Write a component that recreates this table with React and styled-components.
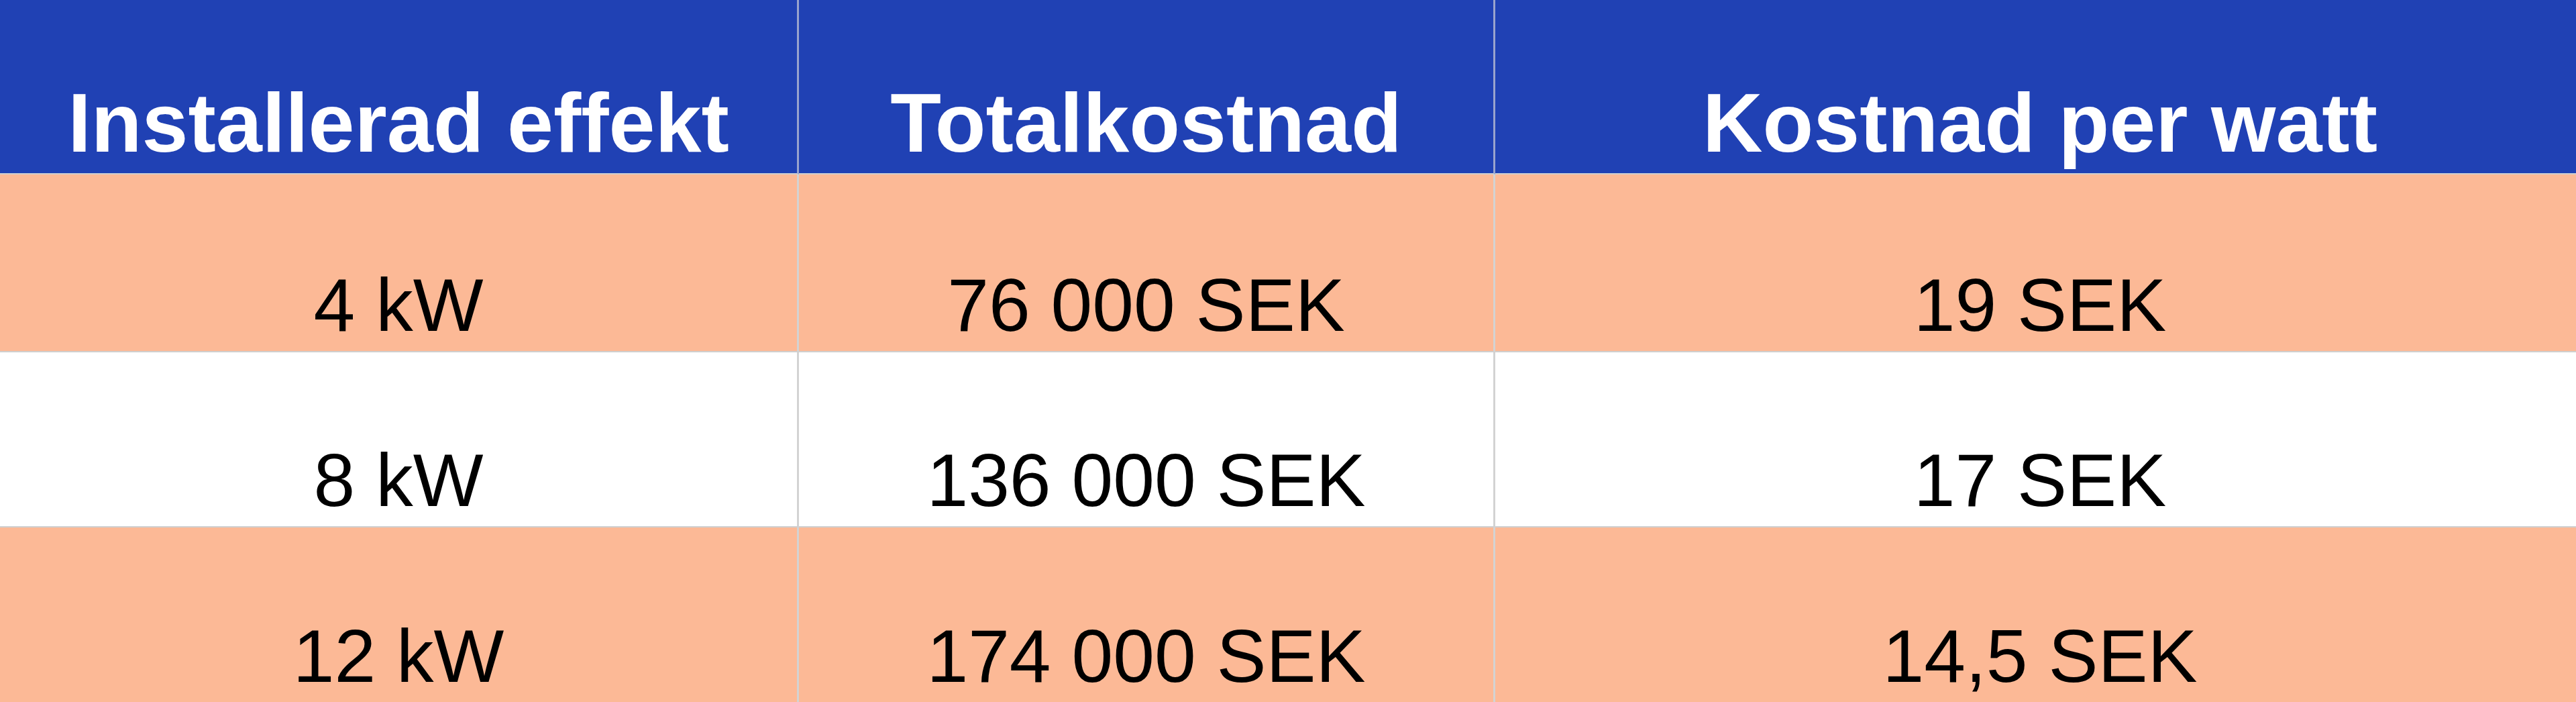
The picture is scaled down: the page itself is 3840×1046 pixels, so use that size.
import React from 'react';
import styled, { createGlobalStyle } from 'styled-components';

const GlobalStyle = createGlobalStyle`
  html, body {
    margin: 0;
    padding: 0;
    background: #ffffff;
    overflow: hidden;
  }
  body {
    font-family: "Liberation Sans", Arial, sans-serif;
  }
`;

const Table = styled.div`
  display: grid;
  grid-template-columns: 1191px 1038px 1627px;
  grid-template-rows: 260px 265px 261px 262px;
  width: 3856px;
`;

const Cell = styled.div`
  display: flex;
  align-items: flex-end;
  justify-content: center;
  box-sizing: border-box;
  border-right: 3px solid #d3d3d3;
  border-bottom: 2px solid #cfcfcf;
  background: ${p => (p.$shade ? '#fcb996' : '#ffffff')};
  color: #000000;
  font-size: 111px;
  line-height: 1;
  padding-bottom: 12px;
  white-space: nowrap;
`;

const HeadCell = styled(Cell)`
  background: #2041b4;
  color: #ffffff;
  font-weight: 700;
  font-size: 124px;
  padding-bottom: 13px;
  border-right-color: rgba(205, 205, 215, 0.7);
`;

const headers = ['Installerad effekt', 'Totalkostnad', 'Kostnad per watt'];

const rows = [
  ['4 kW', '76 000 SEK', '19 SEK'],
  ['8 kW', '136 000 SEK', '17 SEK'],
  ['12 kW', '174 000 SEK', '14,5 SEK'],
];

export default function App() {
  return (
    <>
      <GlobalStyle />
      <Table>
        {headers.map(h => (
          <HeadCell key={h}>{h}</HeadCell>
        ))}
        {rows.map((row, i) =>
          row.map((value, j) => (
            <Cell key={`${i}-${j}`} $shade={i % 2 === 0}>
              {value}
            </Cell>
          ))
        )}
      </Table>
    </>
  );
}
